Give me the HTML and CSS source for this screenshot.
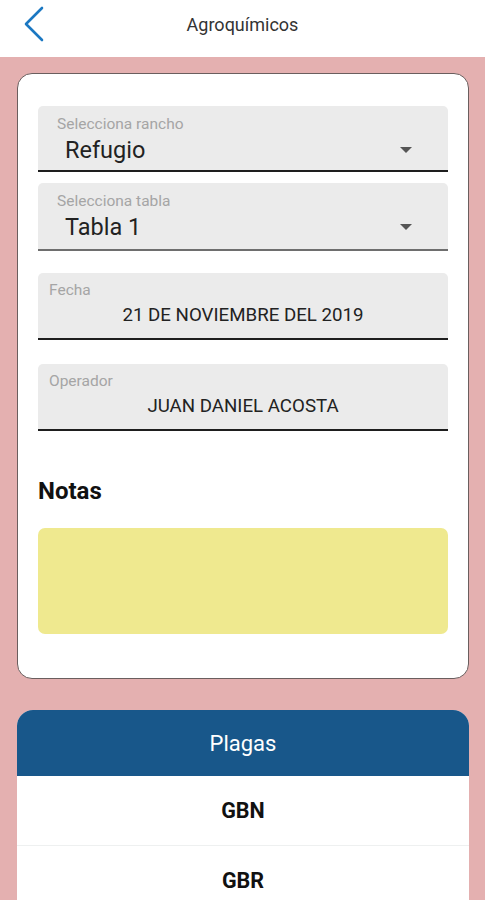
FILE: index.html
```html
<!DOCTYPE html>
<html lang="es">
<head>
  <meta charset="UTF-8">
  <meta name="viewport" content="width=device-width, initial-scale=1.0">
  <title>Agroquímicos</title>
  <link rel="stylesheet" href="styles.css">
</head>
<body>
  <header class="topbar">
    <a class="back" href="#" aria-label="Regresar">
      <svg width="22" height="36" viewBox="0 0 22 36">
        <polyline points="19,2 3,18 19,34" fill="none" stroke="#1b78c2" stroke-width="2.6" stroke-linecap="round" stroke-linejoin="round"/>
      </svg>
    </a>
    <h1 class="title">Agroquímicos</h1>
    <span></span>
  </header>

  <main class="content">
    <section class="card form">
      <div class="field select">
        <span class="label">Selecciona rancho</span>
        <div class="select-row">
          <span class="value">Refugio</span>
          <span class="caret"></span>
        </div>
      </div>

      <div class="field select muted">
        <span class="label">Selecciona tabla</span>
        <div class="select-row">
          <span class="value">Tabla 1</span>
          <span class="caret"></span>
        </div>
      </div>

      <div class="field text">
        <span class="label">Fecha</span>
        <span class="value">21 DE NOVIEMBRE DEL 2019</span>
      </div>

      <div class="field text">
        <span class="label">Operador</span>
        <span class="value">JUAN DANIEL ACOSTA</span>
      </div>

      <h2 class="notes-title">Notas</h2>
      <div class="notes"></div>
    </section>

    <section class="card list">
      <div class="list-head">Plagas</div>
      <div class="list-item">GBN</div>
      <div class="list-item">GBR</div>
    </section>
  </main>
</body>
</html>
```

FILE: styles.css
```css
body {
  margin: 0;
  background: #e4b0b0;
  font-family: Roboto, "Noto Sans", sans-serif;
  color: #222;
}
.topbar {
  height: 57px;
  box-sizing: border-box;
  padding-bottom: 9px;
  background: #fff;
  display: grid;
  grid-template-columns: 60px 1fr 60px;
  align-items: center;
}
.back {
  display: flex;
  padding-left: 23px;
}
.title {
  margin: 0;
  text-align: center;
  font-size: 18px;
  font-weight: 400;
  color: #333;
}
.content {
  padding: 16px 16px 0 17px;
}
.card {
  background: #fff;
  border-radius: 15px;
  overflow: hidden;
}
.form {
  border: 1px solid #6a5e5e;
  padding: 32px 20px 44px;
  display: flex;
  flex-direction: column;
}
.field {
  background: #ebebeb;
  border-radius: 5px 5px 0 0;
  border-bottom: 2px solid #1e1e1e;
  display: flex;
  flex-direction: column;
}
.field.muted {
  border-bottom-color: #6e6e6e;
}
.field .label {
  font-size: 15.5px;
  line-height: 16px;
  color: #a5a5a5;
}
.select {
  padding: 10px 36px 8px 19px;
  margin-bottom: 11px;
}
.select.muted {
  padding-bottom: 10px;
  margin-bottom: 22px;
}
.select-row {
  display: flex;
  align-items: center;
  justify-content: space-between;
  margin-top: 6px;
  padding-left: 8px;
}
.select .value {
  font-size: 23.5px;
  line-height: 24px;
  color: #222;
}
.caret {
  width: 0;
  height: 0;
  border-left: 6px solid transparent;
  border-right: 6px solid transparent;
  border-top: 6px solid #555;
}
.text {
  padding: 9px 11px 13px;
  margin-bottom: 24px;
}
.text + .notes-title {
  margin-top: 23px;
}
.text .value {
  margin-top: 7px;
  font-size: 18.7px;
  line-height: 20px;
  text-align: center;
  color: #222;
}
.notes-title {
  margin: 0 0 24px;
  font-size: 24px;
  line-height: 26px;
  font-weight: 700;
  color: #111;
}
.notes {
  height: 106px;
  background: #efe98f;
  border-radius: 7px;
}
.list {
  margin-top: 31px;
  border-radius: 16px 16px 0 0;
}
.list-head {
  height: 66px;
  background: #18578a;
  color: #fff;
  font-size: 22px;
  display: flex;
  align-items: center;
  justify-content: center;
}
.list-item {
  height: 69px;
  display: flex;
  align-items: center;
  justify-content: center;
  font-size: 21.5px;
  font-weight: 700;
  color: #111;
  border-bottom: 1px solid #eef0f0;
}
```
